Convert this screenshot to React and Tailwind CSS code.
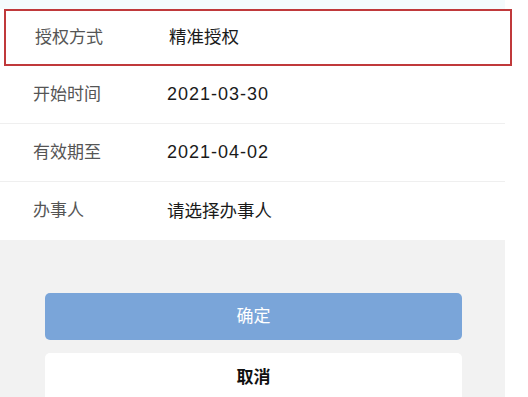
export default function App() {
    const rows = [
        { label: "开始时间", value: "2021-03-30", date: true },
        { label: "有效期至", value: "2021-04-02", date: true },
        { label: "办事人", value: "请选择办事人", date: false },
    ];

    return (
        <div
            className="w-[528px] h-[397px] overflow-hidden bg-white"
            style={{ fontFamily: '"Liberation Sans", "Noto Sans CJK SC", sans-serif' }}
        >
            <div className="w-[505px] h-full flex flex-col bg-[#f2f2f2]">
                {/* Form rows */}
                <div className="bg-white">
                    <div className="h-[9px] bg-[#f4fbfd]"></div>
                    <div className="h-[57px] mx-[4px] w-[508px] border-2 border-[#c0393b] flex items-center pl-[29px]">
                        <span className="w-[134px] text-[17px] text-[#555]">授权方式</span>
                        <span className="text-[17.5px] text-[#1a1a1a]">精准授权</span>
                    </div>
                    {rows.map((row, i) => (
                        <div
                            key={row.label}
                            className={
                                i < 2
                                    ? "h-[58px] flex items-center pl-[33px] border-b border-[#efefef]"
                                    : "h-[58px] flex items-center pl-[33px]"
                            }
                        >
                            <span className="w-[134px] text-[17px] text-[#555]">{row.label}</span>
                            <span
                                className={
                                    row.date
                                        ? "text-[18px] tracking-[1px] text-[#1a1a1a]"
                                        : "text-[17.5px] text-[#1a1a1a]"
                                }
                            >
                                {row.value}
                            </span>
                        </div>
                    ))}
                </div>

                {/* Buttons */}
                <div className="flex-1 px-[45px] pt-[53px] flex flex-col gap-[13px]">
                    <button className="h-[47px] w-[417px] rounded-[5px] bg-[#7aa5d9] text-white text-[17px]">
                        确定
                    </button>
                    <button className="h-[50px] w-[417px] rounded-t-[5px] bg-white text-[#111] text-[17px] font-bold">
                        取消
                    </button>
                </div>
            </div>
        </div>
    );
}
